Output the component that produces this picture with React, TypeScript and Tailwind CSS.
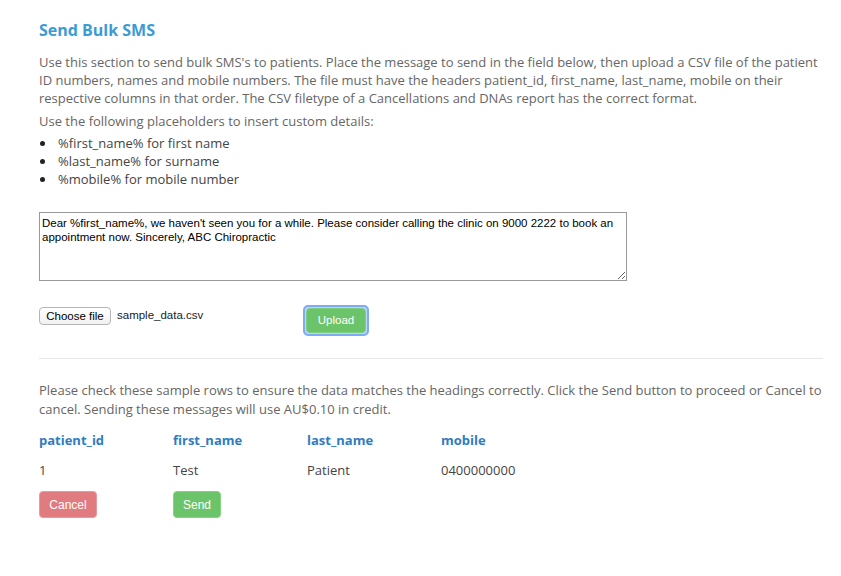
export default function App() {
    const rows = [{ patient_id: '1', first_name: 'Test', last_name: 'Patient', mobile: '0400000000' }];

    return (
        <div className="min-h-[576px] w-full bg-white pl-[39px] pr-[18px] pt-[19px] font-['Open_Sans',sans-serif] text-[13px] text-[#666]">
            <h1 className="text-[16px] font-bold leading-[22px] text-[#3b9bd6]">Send Bulk SMS</h1>

            <p className="mt-[12px] leading-[18px]">
                Use this section to send bulk SMS's to patients. Place the message to send in the field below, then upload a CSV
                file of the patient ID numbers, names and mobile numbers. The file must have the headers patient_id, first_name,
                last_name, mobile on their respective columns in that order. The CSV filetype of a Cancellations and DNAs report
                has the correct format.
            </p>
            <p className="mt-[5px] leading-[18px]">Use the following placeholders to insert custom details:</p>
            <ul className="mt-[4px] leading-[18px] text-[#444]">
                <li className="flex items-center">
                    <span className="ml-[1px] mr-[13px] h-[5px] w-[5px] rounded-full bg-[#222]" />
                    %first_name% for first name
                </li>
                <li className="flex items-center">
                    <span className="ml-[1px] mr-[13px] h-[5px] w-[5px] rounded-full bg-[#222]" />
                    %last_name% for surname
                </li>
                <li className="flex items-center">
                    <span className="ml-[1px] mr-[13px] h-[5px] w-[5px] rounded-full bg-[#222]" />
                    %mobile% for mobile number
                </li>
            </ul>

            <textarea
                className="mt-[24px] block h-[69px] w-[588px] border border-[#999] px-[2px] pt-[3px] font-['Liberation_Sans',Arial,sans-serif] text-[11.5px] leading-[14px] text-black outline-none"
                defaultValue="Dear %first_name%, we haven't seen you for a while. Please consider calling the clinic on 9000 2222 to book an appointment now. Sincerely, ABC Chiropractic"
            />

            <div className="mt-[24px] flex items-start font-['Liberation_Sans',Arial,sans-serif] text-[11.5px]">
                <div className="mt-[2px] flex w-[264px] items-center gap-[6px]">
                    <button className="h-[18px] w-[72px] rounded-[4px] border border-[#b5b5b5] bg-gradient-to-b from-white to-[#f1f1f1] leading-[16px] text-black">
                        Choose file
                    </button>
                    <span className="text-[#222]">sample_data.csv</span>
                </div>
                <div className="rounded-[5px] border-2 border-[#7eaaf7] bg-[#b9d3fb] p-[1px]">
                    <button className="h-[25px] w-[60px] rounded-[4px] border border-[#7fd07c] bg-[#6cc46a] text-[11.5px] text-white">
                        Upload
                    </button>
                </div>
            </div>

            <hr className="mt-[22px] border-t border-[#e6e6e6]" />

            <p className="mt-[22px] leading-[19px]">
                Please check these sample rows to ensure the data matches the headings correctly. Click the Send button to proceed
                or Cancel to cancel. Sending these messages will use AU$0.10 in credit.
            </p>

            <table className="mt-[12px] table-fixed border-collapse">
                <thead>
                    <tr className="text-left font-bold text-[#2f7cbf]">
                        <th className="w-[134px] pb-[12px] leading-[18px]">patient_id</th>
                        <th className="w-[134px] pb-[12px] leading-[18px]">first_name</th>
                        <th className="w-[134px] pb-[12px] leading-[18px]">last_name</th>
                        <th className="w-[134px] pb-[12px] leading-[18px]">mobile</th>
                    </tr>
                </thead>
                <tbody className="text-[#444]">
                    {rows.map((r) => (
                        <tr key={r.patient_id}>
                            <td className="leading-[18px]">{r.patient_id}</td>
                            <td className="leading-[18px]">{r.first_name}</td>
                            <td className="leading-[18px]">{r.last_name}</td>
                            <td className="leading-[18px]">{r.mobile}</td>
                        </tr>
                    ))}
                </tbody>
            </table>

            <div className="mt-[12px] flex font-['Liberation_Sans',Arial,sans-serif] text-[12px] text-white">
                <div className="w-[134px]">
                    <button className="h-[27px] w-[58px] rounded-[4px] border border-[#ea9a9c] bg-[#e07c80]">Cancel</button>
                </div>
                <button className="h-[27px] w-[48px] rounded-[4px] border border-[#82d47e] bg-[#6cc46a]">Send</button>
            </div>
        </div>
    );
}
